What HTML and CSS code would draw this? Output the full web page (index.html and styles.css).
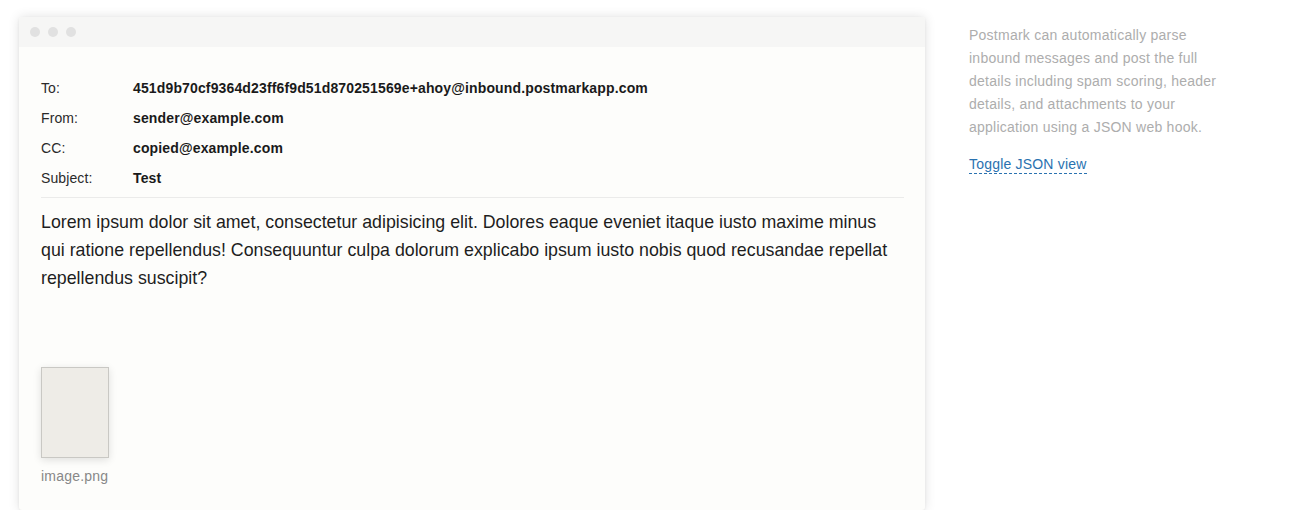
FILE: index.html
```html
<!DOCTYPE html>
<html>
<head>
<meta charset="utf-8">
<link rel="stylesheet" href="styles.css">
</head>
<body>
<div class="page">
  <div class="window">
    <div class="titlebar">
      <span class="dot"></span><span class="dot"></span><span class="dot"></span>
    </div>
    <div class="content">
      <div class="headers">
        <div class="row"><span class="label">To:</span><span class="value">451d9b70cf9364d23ff6f9d51d870251569e+ahoy@inbound.postmarkapp.com</span></div>
        <div class="row"><span class="label">From:</span><span class="value">sender@example.com</span></div>
        <div class="row"><span class="label">CC:</span><span class="value">copied@example.com</span></div>
        <div class="row"><span class="label">Subject:</span><span class="value">Test</span></div>
      </div>
      <p class="body">Lorem ipsum dolor sit amet, consectetur adipisicing elit. Dolores eaque eveniet itaque iusto maxime minus qui ratione repellendus! Consequuntur culpa dolorum explicabo ipsum iusto nobis quod recusandae repellat repellendus suscipit?</p>
      <div class="attachment">
        <div class="thumb"></div>
        <div class="filename">image.png</div>
      </div>
    </div>
  </div>
  <div class="sidebar">
    <p class="desc">Postmark can automatically parse inbound messages and post the full details including spam scoring, header details, and attachments to your application using a JSON web hook.</p>
    <a class="toggle" href="#">Toggle JSON view</a>
  </div>
</div>
</body>
</html>
```
FILE: styles.css
```css
html, body {
  margin: 0;
  padding: 0;
  background: #ffffff;
  font-family: "Liberation Sans", Arial, sans-serif;
}
.page {
  display: flex;
  align-items: flex-start;
  padding: 17px 0 0 19px;
}
.window {
  width: 906px;
  height: 493px;
  background: #fdfdfb;
  box-shadow: 0 0 12px rgba(0, 0, 0, 0.12), 0 1px 3px rgba(0,0,0,0.06);
  border-radius: 3px;
  display: flex;
  flex-direction: column;
  flex-shrink: 0;
}
.titlebar {
  height: 30px;
  background: #f6f6f5;
  display: flex;
  align-items: center;
  gap: 8px;
  padding-left: 11px;
  border-radius: 3px 3px 0 0;
}
.dot {
  width: 10px;
  height: 10px;
  border-radius: 50%;
  background: #e1e1e1;
}
.content {
  padding: 26px 21px 0 22px;
}
.headers {
  padding-bottom: 4px;
  border-bottom: 1px solid #ebebea;
}
.row {
  display: flex;
  height: 30px;
  line-height: 30px;
  font-size: 14px;
  color: #2a2a2a;
}
.label {
  width: 92px;
  flex-shrink: 0;
  letter-spacing: 0.1px;
}
.value {
  font-weight: bold;
  color: #1a1a1a;
  letter-spacing: 0.14px;
}
.body {
  margin: 10px 0 0;
  font-size: 17.8px;
  line-height: 28px;
  color: #1e1e1e;
}
.attachment {
  margin-top: 75px;
}
.thumb {
  width: 66px;
  height: 89px;
  border: 1px solid #c9c8c4;
  background: #eeece7;
  box-shadow: 0 2px 8px rgba(0, 0, 0, 0.12);
}
.filename {
  margin-top: 8px;
  font-size: 14px;
  line-height: 20px;
  color: #888;
  letter-spacing: 0.2px;
}
.sidebar {
  margin-left: 44px;
  width: 270px;
  padding-top: 7px;
}
.desc {
  margin: 0;
  font-size: 14px;
  line-height: 23px;
  color: #adadad;
  letter-spacing: 0.24px;
}
.toggle {
  display: inline-block;
  margin-top: 16px;
  font-size: 14px;
  line-height: 18px;
  color: #2a72b0;
  text-decoration: none;
  border-bottom: 1px dashed #2a72b0;
  letter-spacing: 0.2px;
}
```
